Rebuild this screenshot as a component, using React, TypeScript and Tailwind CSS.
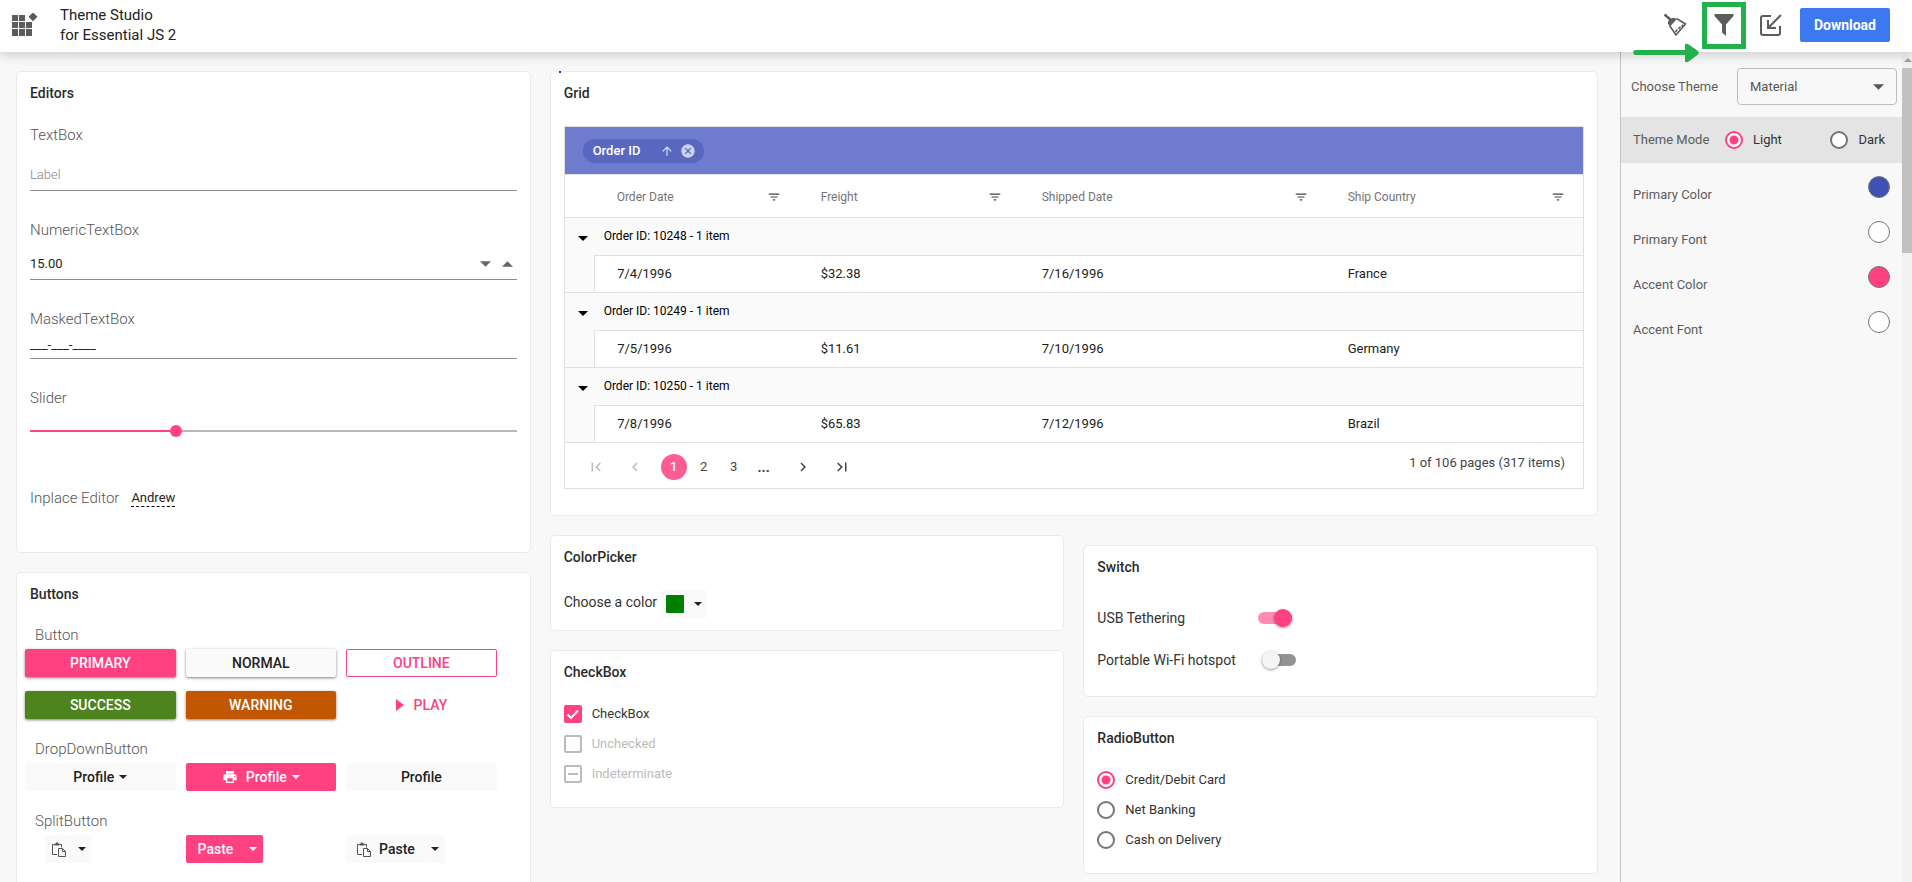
import { useState } from 'react';
import type { ReactNode } from 'react';
import { MdArrowUpward, MdCancel, MdChevronLeft, MdChevronRight, MdFilterList, MdFirstPage, MdLastPage, MdPrint } from 'react-icons/md';

const orders = [
  { id: 10248, orderDate: '7/4/1996', freight: '$32.38', shipped: '7/16/1996', country: 'France' },
  { id: 10249, orderDate: '7/5/1996', freight: '$11.61', shipped: '7/10/1996', country: 'Germany' },
  { id: 10250, orderDate: '7/8/1996', freight: '$65.83', shipped: '7/12/1996', country: 'Brazil' },
];

const columns = ['Order Date', 'Freight', 'Shipped Date', 'Ship Country'];

const themeColors = [
  { name: 'Primary Color', swatch: 'bg-[#3f51b5]' },
  { name: 'Primary Font', swatch: 'bg-white' },
  { name: 'Accent Color', swatch: 'bg-[#ff4081]' },
  { name: 'Accent Font', swatch: 'bg-white' },
];

const Caret = ({ className = '' }: { className?: string }) => (
  <svg viewBox="0 0 10 5" className={`shrink-0 ${className}`} fill="currentColor" aria-hidden="true">
    <path d="M0 0h10L5 5z" />
  </svg>
);

const ClipboardIcon = () => (
  <svg width="14" height="15" viewBox="0 0 14 15" fill="none" stroke="#555" aria-hidden="true">
    <path d="M5 12.500H.5v-10h2M7.500 2.500h2v3" />
    <path d="M2.500 3.500v-2h1.500V.5h2v1h1.500v2z" fill="#555" stroke="none" />
    <path d="M6.500 6.500h4l3 3v5h-7zM10.500 6.500v3h3" />
  </svg>
);

const Card = ({ title, className = '', children }: { title: string; className?: string; children: ReactNode }) => (
  <section className={`rounded-[5px] border border-[#eaeaea] bg-white px-[13px] py-3 ${className}`}>
    <h2 className="text-sm leading-[18px] font-medium text-[#2b2b2b]">{title}</h2>
    {children}
  </section>
);

const Radio = ({ name, label, defaultChecked }: { name: string; label: string; defaultChecked?: boolean }) => (
  <label className="flex items-center gap-[10px] text-[13px] leading-[18px] text-[#333]">
    <input
      type="radio"
      name={name}
      defaultChecked={defaultChecked}
      className="size-[18px] appearance-none rounded-full border-2 border-[#757575] bg-white checked:border-[#ff4081] checked:bg-[radial-gradient(circle,#ff4081_4px,white_5px)]"
    />
    {label}
  </label>
);

const Header = () => (
  <header className="relative z-10 flex h-[52px] shrink-0 items-center bg-white pr-[22px] pb-[2px] pl-3 shadow-[0_2px_12px_rgba(0,0,0,0.2)]">
    <svg width="26" height="26" viewBox="0 0 26 26" fill="#5c5c5c" aria-hidden="true">
      <path d="M0 3h6v6H0zM7 3h6v6H7zM0 10h6v6H0zM7 10h6v6H7zM14 10h6v6h-6zM0 17h6v7H0zM7 17h6v7H7zM14 17h6v7h-6z" />
      <path d="M21 1.500l3.500 3.300-3.500 3.400-3.500-3.400z" stroke="#5c5c5c" strokeWidth="1.500" strokeLinejoin="round" />
    </svg>
    <h1 className="ml-[22px] text-[15px] leading-5 text-[#222]">
      Theme Studio
      <br />
      for Essential JS 2
    </h1>

    <div className="ml-auto flex items-center">
      <button aria-label="Reset">
        <svg width="24" height="24" viewBox="0 0 24 24" aria-hidden="true">
          <path d="M1.500 1.500l7 6" stroke="#5c5c5c" strokeWidth="2.400" />
          <path d="M5 10.500C4.500 7.500 7.500 4.500 12 5l1.500 1.500-6.500 7z" fill="#5c5c5c" />
          <path d="M13.500 5.500l9 5.500-9.500 11L6.500 12.500M12.500 19l1.800-2.500M15.500 16l2-2.300M18.500 13.500l1.700-1.800" fill="none" stroke="#5c5c5c" strokeWidth="1.600" />
        </svg>
      </button>
      {/* highlighted filter button with its pointer */}
      <div className="relative ml-[15px]">
        <button aria-label="Filter" className="flex h-[47px] w-11 items-center justify-center border-[5px] border-[#22b14c]">
          <svg width="20" height="22" viewBox="0 0 20 22" fill="#5c5c5c" aria-hidden="true">
            <path d="M.5 0h19v2L12 10.500V22l-4-3.500v-8L.5 2z" />
          </svg>
        </button>
        <svg width="67" height="20" viewBox="0 0 67 20" fill="#22b14c" className="absolute top-[41px] right-[47px]" aria-hidden="true">
          <path d="M2.500 7H53V2q0-2 3-1l10 7q1.500 2 0 3.500L56 19q-3 1-3-1v-6H2.500q-2.500-2.500 0-5z" />
        </svg>
      </div>
      <button aria-label="Import" className="ml-[14px]">
        <svg width="22" height="22" viewBox="0 0 22 22" fill="none" stroke="#5c5c5c" strokeWidth="2" aria-hidden="true">
          <path d="M11 2H3Q1 2 1 4v15q0 2 2 2h15q2 0 2-2v-7M21 1L8 14M8 6v8h8" />
        </svg>
      </button>
      <button className="ml-[18px] h-[34px] rounded-[2px] bg-[#3c78f0] px-[14px] text-sm font-bold text-white">Download</button>
    </div>
  </header>
);

const Editors = () => {
  const [amount, setAmount] = useState(15);
  const [level, setLevel] = useState(30);
  const label = 'block text-[15px] leading-5 font-light text-[#555]';
  const input = 'w-full border-b border-[#8c8c8c] text-[13px] text-[#222] outline-none';

  return (
    <Card title="Editors" className="pb-11">
      <label htmlFor="textbox" className={`mt-[23px] ${label}`}>TextBox</label>
      <input id="textbox" placeholder="Label" className={`mt-[14px] h-8 placeholder:font-light placeholder:text-[#888] ${input}`} />

      <label htmlFor="numeric" className={`mt-[29px] ${label}`}>NumericTextBox</label>
      <div className="mt-2 flex h-8 items-center border-b border-[#8c8c8c] pr-1">
        <input id="numeric" value={amount.toFixed(2)} readOnly className="w-full min-w-0 text-[13px] text-[#222] outline-none" />
        <button aria-label="Decrease" onClick={() => setAmount(amount - 1)}>
          <Caret className="h-[6px] w-[11px] text-[#666]" />
        </button>
        <button aria-label="Increase" onClick={() => setAmount(amount + 1)} className="ml-[11px]">
          <Caret className="h-[6px] w-[11px] rotate-180 text-[#666]" />
        </button>
      </div>

      <label htmlFor="masked" className={`mt-[29px] ${label}`}>MaskedTextBox</label>
      <input id="masked" defaultValue="___-___-____" className={`mt-[2px] h-7 ${input}`} />

      <label htmlFor="slider" className={`mt-[29px] ${label}`}>Slider</label>
      <div className="relative mt-[17px] flex h-3 items-center">
        <div className="h-[2px] w-full bg-[#b8b8b8]">
          <div className="h-full bg-[#ff4081]" style={{ width: `${level}%` }} />
        </div>
        <input
          id="slider"
          type="range"
          value={level}
          onChange={(e) => setLevel(Number(e.target.value))}
          className="absolute -inset-x-[6px] h-3 appearance-none bg-transparent [&::-webkit-slider-thumb]:size-3 [&::-webkit-slider-thumb]:appearance-none [&::-webkit-slider-thumb]:rounded-full [&::-webkit-slider-thumb]:bg-[#ff4081]"
        />
      </div>

      <div className="mt-[51px] flex items-center">
        <span className={label}>Inplace Editor</span>
        <button className="ml-3 border-b border-dashed border-black text-[13px] leading-4 text-[#222]">Andrew</button>
      </div>
    </Card>
  );
};

const Buttons = () => {
  const label = 'pl-[10px] text-[15px] leading-5 font-light text-[#555]';
  const btn = 'flex h-7 items-center justify-center rounded-[2px] text-sm font-medium';
  const raised = 'shadow-[0_1px_3px_rgba(0,0,0,0.5)]';

  return (
    <Card title="Buttons" className="h-[360px]">
      <div className="mt-[22px] -ml-[5px] pr-5">
        <h3 className={label}>Button</h3>
        <div className="mt-1 grid grid-cols-3 gap-x-[10px] gap-y-[14px]">
          <button className={`${btn} ${raised} bg-[#ff4081] text-white`}>PRIMARY</button>
          <button className={`${btn} ${raised} bg-[#fafafa] text-[#222]`}>NORMAL</button>
          <button className={`${btn} border border-[#ff4081] text-[#ff4081]`}>OUTLINE</button>
          <button className={`${btn} ${raised} bg-[#4d841d] text-white`}>SUCCESS</button>
          <button className={`${btn} ${raised} bg-[#c15700] text-white`}>WARNING</button>
          <button className={`${btn} gap-[10px] text-[#ff4081]`}>
            <svg width="8" height="12" viewBox="0 0 8 12" fill="currentColor" aria-hidden="true">
              <path d="M0 0l8 6-8 6z" />
            </svg>
            PLAY
          </button>
        </div>

        <h3 className={`mt-5 ${label}`}>DropDownButton</h3>
        <div className="mt-1 grid grid-cols-3 gap-[10px]">
          <button className={`${btn} gap-[5px] bg-[#fafafa] text-[#222]`}>
            Profile <Caret className="h-1 w-2" />
          </button>
          <button className={`${btn} gap-[5px] bg-[#ff4081] text-white`}>
            <MdPrint className="mr-[3px] size-4" /> Profile <Caret className="h-1 w-2" />
          </button>
          <button className={`${btn} bg-[#fafafa] text-[#222]`}>Profile</button>
        </div>

        <h3 className={`mt-5 ${label}`}>SplitButton</h3>
        <div className="mt-1 grid grid-cols-3 gap-[10px]">
          <div className="flex pl-5">
            <button aria-label="Paste" className={`${btn} bg-[#fafafa] pr-[6px] pl-[7px]`}><ClipboardIcon /></button>
            <button aria-label="Paste options" className={`${btn} bg-[#fafafa] px-[6px] text-[#222]`}><Caret className="h-1 w-2" /></button>
          </div>
          <div className="flex">
            <button className={`${btn} rounded-r-none bg-[#ff4081] pr-[10px] pl-3 text-white`}>Paste</button>
            <button aria-label="Paste options" className={`${btn} rounded-l-none bg-[#ff4081] px-[6px] text-white`}><Caret className="h-1 w-2" /></button>
          </div>
          <div className="flex">
            <button className={`${btn} gap-[8px] bg-[#fafafa] pr-[10px] pl-[11px] text-[#222]`}><ClipboardIcon /> Paste</button>
            <button aria-label="Paste options" className={`${btn} bg-[#fafafa] px-[6px] text-[#222]`}><Caret className="h-1 w-2" /></button>
          </div>
        </div>
      </div>
    </Card>
  );
};

const OrderGrid = () => (
  <Card title="Grid" className="relative pb-[26px]">
    <span className="absolute -top-px left-2 size-[2px] bg-[#2a2ae0]" />
    <div className="mt-6 border border-[#e0e0e0]">
      <div className="flex h-[48px] items-center border-b border-[#e0e0e0] bg-[#6f7bcd] pl-[18px]">
        <div className="flex h-6 items-center rounded-full bg-[#5867c0] pr-2 pl-[10px] text-[13px] font-medium text-white">
          Order ID
          <button aria-label="Sort ascending" className="ml-5 text-[#dfe3f7]"><MdArrowUpward className="size-[14px]" /></button>
          <button aria-label="Ungroup" className="ml-[6px] text-[#ccd3f0]"><MdCancel className="size-4" /></button>
        </div>
      </div>

      <table className="w-full table-fixed border-collapse text-left text-[13px] text-[#222]">
        <colgroup>
          <col className="w-[30px]" />
          <col className="w-[204px]" />
          <col className="w-[221px]" />
          <col className="w-[306px]" />
          <col />
        </colgroup>
        <thead>
          <tr className="h-[42px] border-b border-[#e0e0e0]">
            <th />
            {columns.map((c) => (
              <th key={c} className="pt-[2px] pr-[18px] pl-[22px] text-xs font-normal text-[#757575]">
                <div className="flex items-center justify-between">
                  {c}
                  <button aria-label={`Filter ${c}`}><MdFilterList className="size-[14px] text-[#444]" /></button>
                </div>
              </th>
            ))}
          </tr>
        </thead>
        {orders.map((o) => (
          <tbody key={o.id}>
            <tr className="h-[38px] bg-[#fafafa] text-xs">
              <td className="pt-[5px] pl-[13px]"><button aria-label="Collapse" className="block"><Caret className="h-[5px] w-[10px] text-black" /></button></td>
              <td colSpan={4} className="border-b border-[#e0e0e0] pl-[9px] text-black">Order ID: {o.id} - 1 item</td>
            </tr>
            <tr className="h-[37px] border-b border-[#e0e0e0]">
              <td className="border-r border-[#e0e0e0] bg-[#fafafa]" />
              <td className="pl-[22px]">{o.orderDate}</td>
              <td className="pl-[22px]">{o.freight}</td>
              <td className="pl-[22px]">{o.shipped}</td>
              <td className="pl-[22px]">{o.country}</td>
            </tr>
          </tbody>
        ))}
      </table>

      <div className="flex h-[45px] items-center justify-between pt-1 pr-[18px] pl-[22px] text-[13px] text-[#444]">
        <nav className="flex items-center" aria-label="Pages">
          <button aria-label="First page" disabled className="text-[#bbb]"><MdFirstPage className="size-[18px]" /></button>
          <button aria-label="Previous page" disabled className="ml-[21px] text-[#bbb]"><MdChevronLeft className="size-[18px]" /></button>
          <button className="ml-[17px] size-[26px] rounded-full bg-[#ff5c94] font-medium text-white">1</button>
          <button className="ml-1 w-[26px]">2</button>
          <button className="ml-1 w-[26px]">3</button>
          <button className="ml-1 w-[26px] text-sm font-bold">...</button>
          <button aria-label="Next page" className="ml-[17px]"><MdChevronRight className="size-[18px]" /></button>
          <button aria-label="Last page" className="ml-[21px]"><MdLastPage className="size-[18px]" /></button>
        </nav>
        <span className="mb-2">1 of 106 pages (317 items)</span>
      </div>
    </div>
  </Card>
);

const CheckBoxes = () => {
  const box = 'size-[18px] appearance-none rounded-[2px] border-2';
  const row = 'flex items-center gap-[10px] text-[13px] leading-[18px]';

  return (
    <Card title="CheckBox" className="pb-6">
      <div className="mt-6 flex flex-col gap-3">
        <label className={`${row} text-[#333]`}>
          <span className="relative flex">
            <input type="checkbox" defaultChecked className={`${box} peer border-[#757575] checked:border-[#ff4081] checked:bg-[#ff4081]`} />
            <svg viewBox="0 0 18 18" className="pointer-events-none absolute inset-0 hidden peer-checked:block" fill="none" stroke="white" strokeWidth="2" aria-hidden="true">
              <path d="M3.500 9.500l3.500 3.500 7-7.500" />
            </svg>
          </span>
          CheckBox
        </label>
        <label className={`${row} text-[#bbb]`}>
          <input type="checkbox" disabled className={`${box} border-[#bbb]`} />
          Unchecked
        </label>
        <label className={`${row} text-[#bbb]`}>
          <span className="relative flex">
            <input type="checkbox" disabled className={`${box} border-[#bbb]`} />
            <span className="absolute inset-x-1 top-2 h-[2px] bg-[#bbb]" />
          </span>
          Indeterminate
        </label>
      </div>
    </Card>
  );
};

const Toggle = ({ id, defaultChecked }: { id: string; defaultChecked?: boolean }) => (
  <span className="relative flex h-[18px] w-[34px] items-center">
    <input
      id={id}
      type="checkbox"
      role="switch"
      defaultChecked={defaultChecked}
      className="peer h-3 w-full appearance-none rounded-full bg-[#929292] checked:bg-[#ff8cb3]"
    />
    <span className="pointer-events-none absolute left-0 size-[18px] rounded-full bg-[#f5f5f5] shadow-[0_1px_3px_rgba(0,0,0,0.4)] peer-checked:right-0 peer-checked:left-auto peer-checked:bg-[#ff4081]" />
  </span>
);

const Sidebar = () => (
  <aside className="flex w-[292px] shrink-0 border-l border-[#c4c4c4] text-[13px] text-[#5c5c5c]">
    <div className="min-w-0 flex-1 pt-4">
      <div className="flex items-center justify-between pr-[5px] pl-[10px]">
        <label htmlFor="theme">Choose Theme</label>
        <div className="relative w-[160px]">
          <select id="theme" className="h-[37px] w-full appearance-none rounded-[4px] border border-[#bdbdbd] bg-transparent pl-3 text-[#555]">
            <option>Material</option>
          </select>
          <Caret className="pointer-events-none absolute top-4 right-[13px] h-[6px] w-[11px] text-[#555]" />
        </div>
      </div>

      <div className="mt-3 flex h-[46px] items-center bg-[#e4e4e4] pl-3">
        <span className="w-[92px]">Theme Mode</span>
        <Radio name="mode" label="Light" defaultChecked />
        <div className="mr-[17px] ml-auto"><Radio name="mode" label="Dark" /></div>
      </div>

      <div className="mt-[13px]">
        {themeColors.map((c) => (
          <div key={c.name} className="flex h-[45px] items-start justify-between pr-3 pl-3">
            <span className="mt-[9px] leading-5">{c.name}</span>
            <button aria-label={c.name} className={`size-[22px] rounded-full border border-[#777] ${c.swatch}`} />
          </div>
        ))}
      </div>
    </div>

    {/* scroll track */}
    <div className="flex w-[10px] flex-col items-end bg-[#f1f1f1]">
      <Caret className="my-[6px] h-[4px] w-2 rotate-180 text-[#a0a0a0]" />
      <div className="h-[185px] w-full bg-[#c1c1c1]" />
    </div>
  </aside>
);

const App = () => (
  <div className="flex h-screen flex-col overflow-hidden bg-[#f8f8f8] font-[Roboto,sans-serif]">
    <Header />
    <div className="flex min-h-0 flex-1">
      <main className="grid min-w-0 flex-1 grid-cols-3 items-start gap-x-[19px] overflow-hidden pt-[19px] pr-[22px] pl-4">
        <div className="flex flex-col gap-[19px]">
          <Editors />
          <Buttons />
        </div>

        <div className="col-span-2">
          <OrderGrid />
          <div className="mt-[19px] grid grid-cols-2 items-start gap-[19px]">
            <div className="flex flex-col gap-[19px]">
              <Card title="ColorPicker">
                <div className="mt-6 flex items-center">
                  <span className="mb-1 text-sm text-[#333]">Choose a color</span>
                  <button aria-label="Choose a color" className="ml-1 flex h-7 items-center gap-[10px] rounded-[2px] bg-[#fafafa] px-[5px] text-[#222]">
                    <span className="size-[18px] rounded-[1px] bg-[#008000]" />
                    <Caret className="h-1 w-2" />
                  </button>
                </div>
              </Card>
              <CheckBoxes />
            </div>

            <div className="mt-[10px] flex flex-col gap-[19px]">
              <Card title="Switch" className="pb-[26px]">
                <div className="mt-8 flex h-5 items-center text-sm text-[#333]">
                  <label htmlFor="usb" className="w-[161px]">USB Tethering</label>
                  <Toggle id="usb" defaultChecked />
                </div>
                <div className="mt-[22px] flex h-5 items-center gap-[26px] text-sm text-[#333]">
                  <label htmlFor="wifi">Portable Wi-Fi hotspot</label>
                  <Toggle id="wifi" />
                </div>
              </Card>
              <Card title="RadioButton" className="pb-6">
                <div className="mt-6 flex flex-col gap-3">
                  <Radio name="payment" label="Credit/Debit Card" defaultChecked />
                  <Radio name="payment" label="Net Banking" />
                  <Radio name="payment" label="Cash on Delivery" />
                </div>
              </Card>
            </div>
          </div>
        </div>
      </main>
      <Sidebar />
    </div>
  </div>
);

export default App;
